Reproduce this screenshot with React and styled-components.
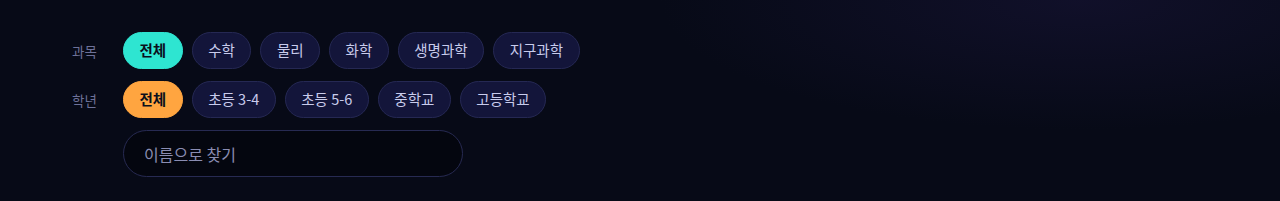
import { useState } from 'react';
import styled, { createGlobalStyle } from 'styled-components';

const SUBJECTS = ['전체', '수학', '물리', '화학', '생명과학', '지구과학'];
const GRADES = ['전체', '초등 3-4', '초등 5-6', '중학교', '고등학교'];

const GlobalStyle = createGlobalStyle`
  html, body {
    margin: 0;
    padding: 0;
    background: #070a17;
  }
  body {
    font-family: "Noto Sans CJK KR", "Noto Sans", sans-serif;
  }
`;

const App = () => {
  const [subject, setSubject] = useState('전체');
  const [grade, setGrade] = useState('전체');
  const [query, setQuery] = useState('');

  return (
    <Page>
      <GlobalStyle />
      <FilterPanel>
        <FilterRow>
          <RowLabel>과목</RowLabel>
          <ChipList>
            {SUBJECTS.map((s) => (
              <Chip
                key={s}
                $active={subject === s}
                $accent='#2ee5d1'
                onClick={() => setSubject(s)}
              >
                {s}
              </Chip>
            ))}
          </ChipList>
        </FilterRow>
        <FilterRow>
          <RowLabel>학년</RowLabel>
          <ChipList>
            {GRADES.map((g) => (
              <Chip
                key={g}
                $active={grade === g}
                $accent='#ffa540'
                onClick={() => setGrade(g)}
              >
                {g}
              </Chip>
            ))}
          </ChipList>
        </FilterRow>
        <FilterRow>
          <RowLabel />
          <SearchInput
            placeholder='이름으로 찾기'
            value={query}
            onChange={(e) => setQuery(e.target.value)}
          />
        </FilterRow>
      </FilterPanel>
    </Page>
  );
};

export default App;

const Page = styled.div`
  width: 1280px;
  height: 201px;
  box-sizing: border-box;
  background:
    radial-gradient(ellipse 420px 130px at 1080px 0px, rgba(20, 18, 48, 0.75), transparent),
    #070a17;
  padding: 32px 0 0 72px;
`;

const FilterPanel = styled.div`
  display: flex;
  flex-direction: column;
  gap: 12px;
`;

const FilterRow = styled.div`
  display: flex;
  align-items: center;
`;

const RowLabel = styled.span`
  width: 51px;
  flex-shrink: 0;
  font-size: 13.5px;
  color: #6d7199;
`;

const ChipList = styled.div`
  display: flex;
  gap: 9px;
`;

const Chip = styled.button`
  height: 37px;
  box-sizing: border-box;
  padding: 0 15.5px;
  border-radius: 999px;
  font-family: inherit;
  font-size: 14.5px;
  font-weight: ${({ $active }) => ($active ? 700 : 400)};
  line-height: 1;
  cursor: pointer;
  border: 1px solid ${({ $active, $accent }) => ($active ? $accent : '#252853')};
  background: ${({ $active, $accent }) => ($active ? $accent : '#13153a')};
  color: ${({ $active }) => ($active ? '#0a0f1c' : '#c8cbec')};
`;

const SearchInput = styled.input`
  width: 340px;
  height: 47px;
  box-sizing: border-box;
  padding: 0 20px;
  border-radius: 999px;
  border: 1px solid #272a52;
  background: #04060f;
  color: #c3c6e6;
  font-family: inherit;
  font-size: 16px;
  outline: none;

  &::placeholder {
    color: #8a8db2;
  }
`;
